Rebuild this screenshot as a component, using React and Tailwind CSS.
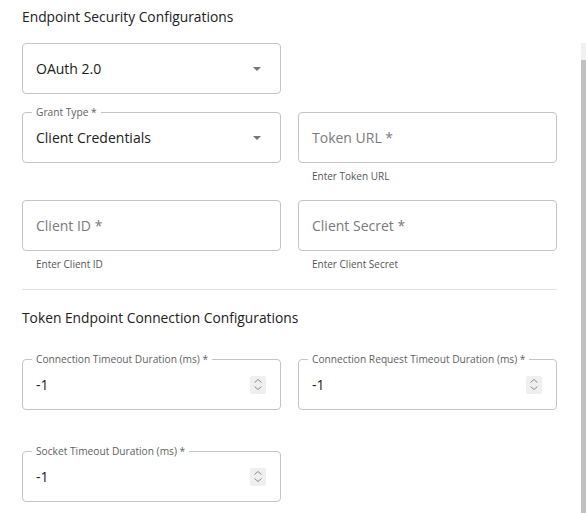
import React from 'react'

const font = { fontFamily: '"Open Sans", "Noto Sans", sans-serif' }

function Caret() {
  return (
    <svg width="8" height="4" viewBox="0 0 8 4" className="shrink-0">
      <path d="M0 0 L8 0 L4 4 Z" fill="#757575" />
    </svg>
  )
}

function Spinner() {
  return (
    <div className="w-[16px] h-[18px] bg-[#efefef] rounded-[2px] flex flex-col items-center justify-center gap-[3px]">
      <svg width="8" height="4" viewBox="0 0 8 4">
        <path d="M0.5 3.5 L4 0.5 L7.5 3.5" fill="none" stroke="#8a8a8a" strokeWidth="1" />
      </svg>
      <svg width="8" height="4" viewBox="0 0 8 4">
        <path d="M0.5 0.5 L4 3.5 L7.5 0.5" fill="none" stroke="#8a8a8a" strokeWidth="1" />
      </svg>
    </div>
  )
}

function Outlined({ label, children }) {
  return (
    <div className="relative w-[259px] h-[51px] border border-[#c4c4c4] rounded-[4px] flex items-center px-[13px]">
      {label && (
        <span className="absolute -top-[8px] left-[9px] px-[4px] bg-white text-[10.2px] leading-[14px] text-[#616161]">
          {label}
        </span>
      )}
      {children}
    </div>
  )
}

function SelectField({ label, value }) {
  return (
    <Outlined label={label}>
      <span className="flex-1 text-[14px] text-[#212121]">{value}</span>
      <span className="mr-[6px]"><Caret /></span>
    </Outlined>
  )
}

function TextField({ placeholder, helper }) {
  return (
    <div className="flex flex-col">
      <Outlined>
        <span className="text-[14px] text-[#7a7a7a]">{placeholder}</span>
      </Outlined>
      <span className="text-[10px] text-[#555] mt-[6px] ml-[14px] h-[14px] leading-[14px]">{helper}</span>
    </div>
  )
}

function NumberField({ label }) {
  return (
    <Outlined label={label}>
      <span className="flex-1 text-[14px] text-[#212121]">-1</span>
      <span className="mr-[1px]"><Spinner /></span>
    </Outlined>
  )
}

export default function App() {
  return (
    <div className="relative w-[586px] h-[513px] bg-white overflow-hidden" style={font}>
      <div className="pl-[22px] pt-[7px]">
        <h2 className="text-[13.8px] leading-[20px] text-[#212121]">Endpoint Security Configurations</h2>
        <div className="mt-[16px]">
          <SelectField value="OAuth 2.0" />
        </div>
        <div className="mt-[18px] grid grid-cols-[259px_259px] gap-x-[17px] gap-y-[17px]">
          <div><SelectField label="Grant Type *" value="Client Credentials" /></div>
          <TextField placeholder="Token URL *" helper="Enter Token URL" />
          <TextField placeholder="Client ID *" helper="Enter Client ID" />
          <TextField placeholder="Client Secret *" helper="Enter Client Secret" />
        </div>
        <div className="mt-[18px] w-[535px] border-t border-[#e0e0e0]" />
        <h2 className="mt-[18px] text-[13.8px] leading-[20px] text-[#212121]">Token Endpoint Connection Configurations</h2>
        <div className="mt-[31px] grid grid-cols-[259px_259px] gap-x-[17px] gap-y-[41px]">
          <NumberField label="Connection Timeout Duration (ms) *" />
          <NumberField label="Connection Request Timeout Duration (ms) *" />
          <NumberField label="Socket Timeout Duration (ms) *" />
        </div>
      </div>
      <div className="absolute right-0 top-[43px] bottom-0 w-[5px] flex flex-col">
        <div className="h-[17px] bg-[#f1f1f1]" />
        <div className="flex-1 bg-[#c1c1c1]" />
      </div>
    </div>
  )
}
